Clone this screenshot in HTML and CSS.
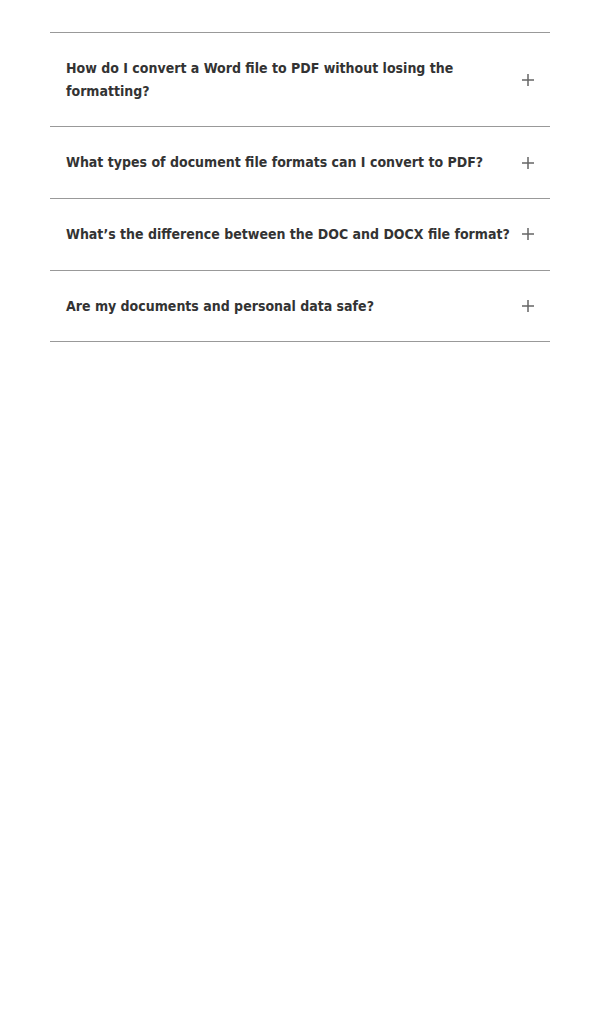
FILE: index.html
```html
<!DOCTYPE html>
<html lang="en">
<head>
<meta charset="utf-8">
<title>FAQ</title>
<link rel="stylesheet" href="styles.css">
</head>
<body>
<div class="faq">
  <div class="item">
    <span class="q">How do I convert a Word file to PDF without losing the formatting?</span>
    <svg class="plus" viewBox="0 0 12 12" width="12" height="12"><path d="M6 0V12M0 6H12" stroke="#666" stroke-width="1.5" fill="none"/></svg>
  </div>
  <div class="item">
    <span class="q">What types of document file formats can I convert to PDF?</span>
    <svg class="plus" viewBox="0 0 12 12" width="12" height="12"><path d="M6 0V12M0 6H12" stroke="#666" stroke-width="1.5" fill="none"/></svg>
  </div>
  <div class="item">
    <span class="q">What’s the difference between the DOC and DOCX file format?</span>
    <svg class="plus" viewBox="0 0 12 12" width="12" height="12"><path d="M6 0V12M0 6H12" stroke="#666" stroke-width="1.5" fill="none"/></svg>
  </div>
  <div class="item">
    <span class="q">Are my documents and personal data safe?</span>
    <svg class="plus" viewBox="0 0 12 12" width="12" height="12"><path d="M6 0V12M0 6H12" stroke="#666" stroke-width="1.5" fill="none"/></svg>
  </div>
</div>
</body>
</html>
```

FILE: styles.css
```css
html, body {
  margin: 0;
  padding: 0;
  background: #fff;
}
body {
  font-family: "DejaVu Sans Condensed", "DejaVu Sans", sans-serif;
  font-stretch: condensed;
  color: #333;
}
.faq {
  width: 500px;
  margin: 32px auto 0;
  border-top: 1px solid #999;
}
.item {
  display: flex;
  align-items: center;
  justify-content: space-between;
  gap: 8px;
  padding: 24px 16px;
  border-bottom: 1px solid #999;
}
.q {
  font-size: 14px;
  font-weight: bold;
  line-height: 22.67px;
}
.plus {
  flex: none;
}
```
